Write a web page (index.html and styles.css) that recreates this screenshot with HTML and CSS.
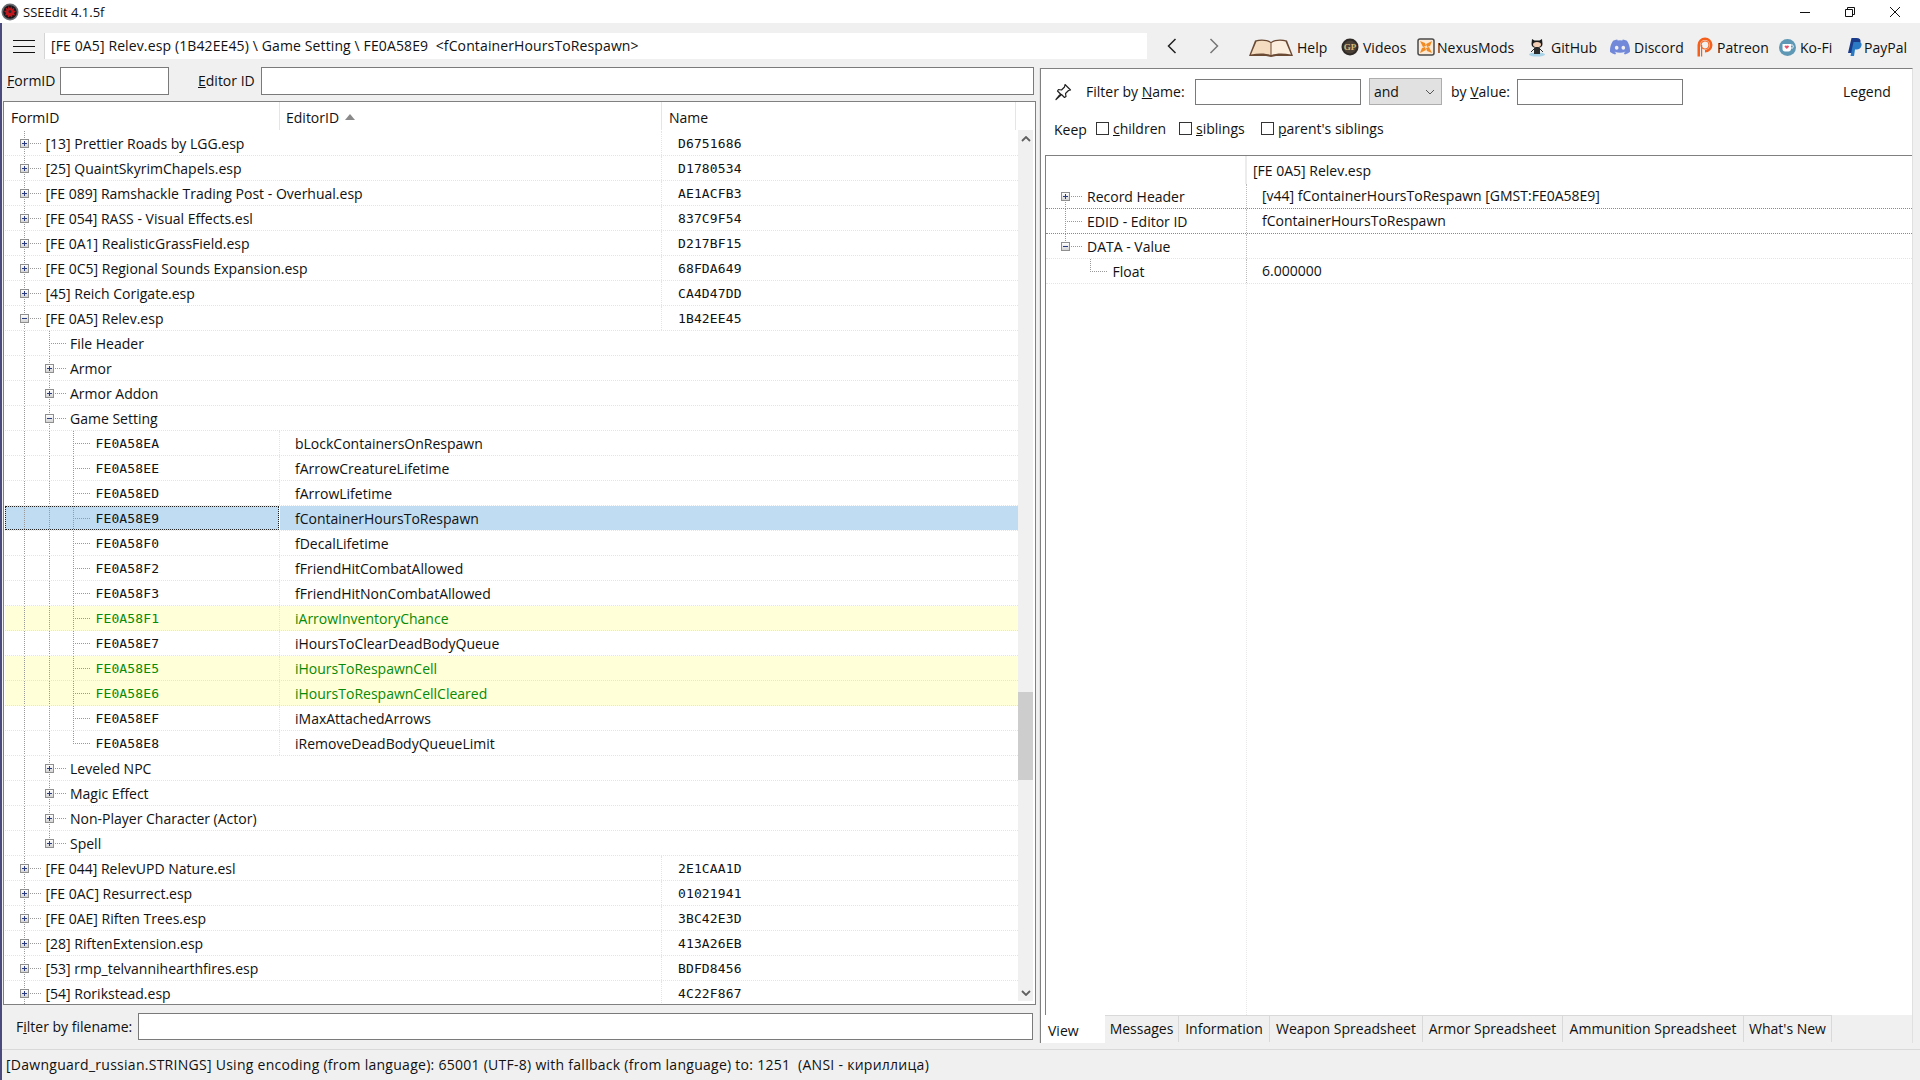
FILE: index.html
```html
<!DOCTYPE html>
<html lang="en">
<head>
  <meta charset="UTF-8" />
  <title>SSEEdit 4.1.5f</title>
  <link rel="stylesheet" href="styles.css">
</head>
<body>

<div class="titlebar">
  <svg class="app-icon" viewBox="0 0 18 18" width="18" height="18">
    <circle cx="9" cy="9" r="8.5" fill="#6a6d72"/>
    <circle cx="9" cy="9" r="6.8" fill="#17171b"/>
    <path d="M9 5.500l1.500-2.500.5 3 2.500-1.500-1 3 2.500.5-2 2 1 2.500-2.500-.5-.5 2.500-2-1.500-2 1.500-.5-2.500-2.500.5 1-2.500-2-2 2.500-.5-1-3 2.500 1.500.5-3z" fill="#c3161c"/>
    <circle cx="9" cy="8.500" r="1.500" fill="#28282c"/>
  </svg>
  <span class="app-title">SSEEdit 4.1.5f</span>
  <div class="winctl">
    <svg viewBox="0 0 12 12" width="12" height="12"><path d="M1 6.500h10" stroke="#111" fill="none"/></svg>
    <svg viewBox="0 0 12 12" width="12" height="12"><path d="M1.500 3.500h7v7h-7zM3.500 3.500v-2h7v7h-2" stroke="#111" fill="none"/></svg>
    <svg viewBox="0 0 12 12" width="12" height="12"><path d="M1 1l10 10M11 1L1 11" stroke="#111" fill="none"/></svg>
  </div>
</div>

<div class="window">
  <div class="toolbar">
    <div class="burger"><i></i><i></i><i></i></div>
    <div class="pathbox">[FE 0A5] Relev.esp (1B42EE45) \ Game Setting \ FE0A58E9  &lt;fContainerHoursToRespawn&gt;</div>
    <div class="nav">
      <svg viewBox="0 0 10 18" width="10" height="18"><path d="M8.500 2L1.500 9l7 7" fill="none" stroke="#222" stroke-width="1.500"/></svg>
      <svg viewBox="0 0 10 18" width="10" height="18"><path d="M1.500 2l7 7-7 7" fill="none" stroke="#777" stroke-width="1.500"/></svg>
    </div>
    <div class="tools">
      <div class="tool">
        <svg viewBox="0 0 44 19" width="44" height="19">
          <path d="M0 18L6 2.500C11 1 18 1 22 4c4-3 11-3 16-1.500L44 18H27l-5 1-5-1z" fill="#6b4a34"/>
          <path d="M2 16.500L7.500 3.500C12 2.200 18 2.500 21.500 5v12c-5-2-12-2-19.500-.5z" fill="#f3dcc0"/>
          <path d="M42 16.500L36.500 3.500C32 2.200 26 2.500 22.500 5v12c5-2 12-2 19.500-.5z" fill="#fbeedd"/>
        </svg>
        <span>Help</span>
      </div>
      <div class="tool">
        <svg viewBox="0 0 18 18" width="18" height="18">
          <circle cx="9" cy="9" r="8.500" fill="#2f2a26"/>
          <circle cx="9" cy="9" r="6.500" fill="#4a4036"/>
          <text x="9" y="12" class="gp-mark">GP</text>
        </svg>
        <span>Videos</span>
      </div>
      <div class="tool">
        <svg viewBox="0 0 18 18" width="18" height="18">
          <rect x="1" y="1" width="16" height="16" rx="2" fill="#fbe9d6" stroke="#4a4a4a" stroke-width="1.500"/>
          <path d="M3 3l5 2 1 3-3 1zM15 3l-2 5-3 1-1-3zM3 15l2-5 3-1 1 3zM15 15l-5-2-1-3 3-1z" fill="#f08a24"/>
        </svg>
        <span>NexusMods</span>
      </div>
      <div class="tool">
        <svg viewBox="0 0 18 20" width="18" height="20">
          <ellipse cx="9" cy="17.500" rx="8" ry="2" fill="#a9d3e8"/>
          <path d="M4 2l2.500 1.500h5L14 2l.5 5c0 2.500-2 4-5.500 4S3.500 9.500 3.500 7z" fill="#1c1c1c"/>
          <ellipse cx="9" cy="7.500" rx="4" ry="2.600" fill="#f3cfb5"/>
          <path d="M6 11h6v6H6z" fill="#2b2b2b"/>
          <path d="M6 12l-3 3M12 12l3 3" stroke="#2b2b2b"/>
        </svg>
        <span>GitHub</span>
      </div>
      <div class="tool">
        <svg viewBox="0 0 24 24" width="20" height="20"><path fill="#7289da" d="M20.317 4.370a19.791 19.791 0 0 0-4.885-1.515.074.074 0 0 0-.079.037c-.210.375-.444.864-.608 1.250a18.270 18.270 0 0 0-5.487 0 12.640 12.640 0 0 0-.617-1.250.077.077 0 0 0-.079-.037A19.736 19.736 0 0 0 3.677 4.370a.070.070 0 0 0-.032.027C.533 9.046-.320 13.580.099 18.057a.082.082 0 0 0 .031.057 19.900 19.900 0 0 0 5.993 3.030.078.078 0 0 0 .084-.028 14.090 14.090 0 0 0 1.226-1.994.076.076 0 0 0-.041-.106 13.107 13.107 0 0 1-1.872-.892.077.077 0 0 1-.008-.128 10.200 10.200 0 0 0 .372-.292.074.074 0 0 1 .077-.010c3.928 1.793 8.180 1.793 12.062 0a.074.074 0 0 1 .078.010c.120.098.246.198.373.292a.077.077 0 0 1-.006.127 12.299 12.299 0 0 1-1.873.892.077.077 0 0 0-.041.107c.360.698.772 1.362 1.225 1.993a.076.076 0 0 0 .084.028 19.839 19.839 0 0 0 6.002-3.030.077.077 0 0 0 .032-.054c.500-5.177-.838-9.674-3.549-13.660a.061.061 0 0 0-.031-.030zM8.020 15.330c-1.183 0-2.157-1.085-2.157-2.419 0-1.333.956-2.419 2.157-2.419 1.210 0 2.176 1.096 2.157 2.420 0 1.333-.956 2.418-2.157 2.418zm7.975 0c-1.183 0-2.157-1.085-2.157-2.419 0-1.333.955-2.419 2.157-2.419 1.210 0 2.176 1.096 2.157 2.420 0 1.333-.946 2.418-2.157 2.418z"/></svg>
        <span>Discord</span>
      </div>
      <div class="tool">
        <svg viewBox="0 0 16 20" width="16" height="20">
          <path fill-rule="evenodd" d="M8 .500a7.500 7.500 0 0 1 0 15v-2.500a5 5 0 1 0-5-5v11.500H.500V8A7.500 7.500 0 0 1 8 .500z" fill="#f4601c"/>
          <circle cx="8" cy="8" r="4" fill="none" stroke="#f4601c" stroke-width="1.200"/>
          <path d="M4 19.500V8h1.200v11.500z" fill="#f4601c"/>
        </svg>
        <span>Patreon</span>
      </div>
      <div class="tool">
        <svg viewBox="0 0 17 17" width="17" height="17">
          <circle cx="8.500" cy="8.500" r="8.500" fill="#5f98b5"/>
          <path d="M3.500 5h8.500v5c0 1.500-1 2.500-2.500 2.500H6c-1.500 0-2.500-1-2.500-2.500z" fill="#fff"/>
          <path d="M12 6h1.500c1 0 1 3 0 3H12" fill="none" stroke="#fff"/>
          <path d="M7.800 10L5.800 8c-.8-1 .8-2.200 2-1 1.200-1.200 2.800 0 2 1z" fill="#e8546c"/>
        </svg>
        <span>Ko-Fi</span>
      </div>
      <div class="tool">
        <svg viewBox="0 0 14 19" width="14" height="19">
          <path d="M3.500 0h5c3 0 4.500 1.500 4 4-.5 3-2.500 4.500-5.500 4.500H5.500L4.500 15H0z" fill="#1a3a8a"/>
          <path d="M5.500 4h5c2.500 0 3.500 1.500 3 3.500-.5 2.500-2.500 4-5 4H7L6 18H2.500z" fill="#2a7ac4"/>
        </svg>
        <span>PayPal</span>
      </div>
    </div>
  </div>

  <div class="main">
    <div class="left">
      <div class="idfilter">
        <label class="lbl-form"><u>F</u>ormID</label>
        <div class="field field-form"></div>
        <label class="lbl-editor"><u>E</u>ditor ID</label>
        <div class="field field-editor"></div>
      </div>

      <div class="listbox">
        <div class="head">
          <div class="hd hd1">FormID</div>
          <div class="hd hd2">EditorID<i class="sort"></i></div>
          <div class="hd hd3">Name</div>
        </div>
        <div class="listwrap">
          <div class="rows">
            <div class="row"><div class="c1"><span class="node"><b class="box plus"></b></span>[13] Prettier Roads by LGG.esp</div><div class="c2"></div><div class="c3 hex">D6751686</div></div>
            <div class="row"><div class="c1"><span class="node"><b class="box plus"></b></span>[25] QuaintSkyrimChapels.esp</div><div class="c2"></div><div class="c3 hex">D1780534</div></div>
            <div class="row"><div class="c1"><span class="node"><b class="box plus"></b></span>[FE 089] Ramshackle Trading Post - Overhual.esp</div><div class="c2"></div><div class="c3 hex">AE1ACFB3</div></div>
            <div class="row"><div class="c1"><span class="node"><b class="box plus"></b></span>[FE 054] RASS - Visual Effects.esl</div><div class="c2"></div><div class="c3 hex">837C9F54</div></div>
            <div class="row"><div class="c1"><span class="node"><b class="box plus"></b></span>[FE 0A1] RealisticGrassField.esp</div><div class="c2"></div><div class="c3 hex">D217BF15</div></div>
            <div class="row"><div class="c1"><span class="node"><b class="box plus"></b></span>[FE 0C5] Regional Sounds Expansion.esp</div><div class="c2"></div><div class="c3 hex">68FDA649</div></div>
            <div class="row"><div class="c1"><span class="node"><b class="box plus"></b></span>[45] Reich Corigate.esp</div><div class="c2"></div><div class="c3 hex">CA4D47DD</div></div>
            <div class="row"><div class="c1"><span class="node"><b class="box minus"></b></span>[FE 0A5] Relev.esp</div><div class="c2"></div><div class="c3 hex">1B42EE45</div></div>

            <div class="row"><div class="c1"><span class="gd"></span><span class="node"></span>File Header</div><div class="c2"></div><div class="c3"></div></div>
            <div class="row"><div class="c1"><span class="gd"></span><span class="node"><b class="box plus"></b></span>Armor</div><div class="c2"></div><div class="c3"></div></div>
            <div class="row"><div class="c1"><span class="gd"></span><span class="node"><b class="box plus"></b></span>Armor Addon</div><div class="c2"></div><div class="c3"></div></div>
            <div class="row"><div class="c1"><span class="gd"></span><span class="node"><b class="box minus"></b></span>Game Setting</div><div class="c2"></div><div class="c3"></div></div>

            <div class="row rec"><div class="c1"><span class="gd"></span><span class="gd"></span><span class="node"></span><span class="hex">FE0A58EA</span></div><div class="c2">bLockContainersOnRespawn</div><div class="c3"></div></div>
            <div class="row rec"><div class="c1"><span class="gd"></span><span class="gd"></span><span class="node"></span><span class="hex">FE0A58EE</span></div><div class="c2">fArrowCreatureLifetime</div><div class="c3"></div></div>
            <div class="row rec"><div class="c1"><span class="gd"></span><span class="gd"></span><span class="node"></span><span class="hex">FE0A58ED</span></div><div class="c2">fArrowLifetime</div><div class="c3"></div></div>
            <div class="row rec sel"><div class="c1"><span class="gd"></span><span class="gd"></span><span class="node"></span><span class="hex">FE0A58E9</span></div><div class="c2">fContainerHoursToRespawn</div><div class="c3"></div></div>
            <div class="row rec"><div class="c1"><span class="gd"></span><span class="gd"></span><span class="node"></span><span class="hex">FE0A58F0</span></div><div class="c2">fDecalLifetime</div><div class="c3"></div></div>
            <div class="row rec"><div class="c1"><span class="gd"></span><span class="gd"></span><span class="node"></span><span class="hex">FE0A58F2</span></div><div class="c2">fFriendHitCombatAllowed</div><div class="c3"></div></div>
            <div class="row rec"><div class="c1"><span class="gd"></span><span class="gd"></span><span class="node"></span><span class="hex">FE0A58F3</span></div><div class="c2">fFriendHitNonCombatAllowed</div><div class="c3"></div></div>
            <div class="row rec new"><div class="c1"><span class="gd"></span><span class="gd"></span><span class="node"></span><span class="hex">FE0A58F1</span></div><div class="c2">iArrowInventoryChance</div><div class="c3"></div></div>
            <div class="row rec"><div class="c1"><span class="gd"></span><span class="gd"></span><span class="node"></span><span class="hex">FE0A58E7</span></div><div class="c2">iHoursToClearDeadBodyQueue</div><div class="c3"></div></div>
            <div class="row rec new"><div class="c1"><span class="gd"></span><span class="gd"></span><span class="node"></span><span class="hex">FE0A58E5</span></div><div class="c2">iHoursToRespawnCell</div><div class="c3"></div></div>
            <div class="row rec new"><div class="c1"><span class="gd"></span><span class="gd"></span><span class="node"></span><span class="hex">FE0A58E6</span></div><div class="c2">iHoursToRespawnCellCleared</div><div class="c3"></div></div>
            <div class="row rec"><div class="c1"><span class="gd"></span><span class="gd"></span><span class="node"></span><span class="hex">FE0A58EF</span></div><div class="c2">iMaxAttachedArrows</div><div class="c3"></div></div>
            <div class="row rec"><div class="c1"><span class="gd"></span><span class="gd"></span><span class="node end"></span><span class="hex">FE0A58E8</span></div><div class="c2">iRemoveDeadBodyQueueLimit</div><div class="c3"></div></div>

            <div class="row"><div class="c1"><span class="gd"></span><span class="node"><b class="box plus"></b></span>Leveled NPC</div><div class="c2"></div><div class="c3"></div></div>
            <div class="row"><div class="c1"><span class="gd"></span><span class="node"><b class="box plus"></b></span>Magic Effect</div><div class="c2"></div><div class="c3"></div></div>
            <div class="row"><div class="c1"><span class="gd"></span><span class="node"><b class="box plus"></b></span>Non-Player Character (Actor)</div><div class="c2"></div><div class="c3"></div></div>
            <div class="row"><div class="c1"><span class="gd"></span><span class="node end"><b class="box plus"></b></span>Spell</div><div class="c2"></div><div class="c3"></div></div>

            <div class="row"><div class="c1"><span class="node"><b class="box plus"></b></span>[FE 044] RelevUPD Nature.esl</div><div class="c2"></div><div class="c3 hex">2E1CAA1D</div></div>
            <div class="row"><div class="c1"><span class="node"><b class="box plus"></b></span>[FE 0AC] Resurrect.esp</div><div class="c2"></div><div class="c3 hex">01021941</div></div>
            <div class="row"><div class="c1"><span class="node"><b class="box plus"></b></span>[FE 0AE] Riften Trees.esp</div><div class="c2"></div><div class="c3 hex">3BC42E3D</div></div>
            <div class="row"><div class="c1"><span class="node"><b class="box plus"></b></span>[28] RiftenExtension.esp</div><div class="c2"></div><div class="c3 hex">413A26EB</div></div>
            <div class="row"><div class="c1"><span class="node"><b class="box plus"></b></span>[53] rmp_telvannihearthfires.esp</div><div class="c2"></div><div class="c3 hex">BDFD8456</div></div>
            <div class="row"><div class="c1"><span class="node"><b class="box plus"></b></span>[54] Rorikstead.esp</div><div class="c2"></div><div class="c3 hex">4C22F867</div></div>
          </div>
          <div class="scrollbar">
            <div class="sb-btn"><svg viewBox="0 0 10 6" width="10" height="6"><path d="M1 5l4-4 4 4" fill="none" stroke="#606060" stroke-width="1.800"/></svg></div>
            <div class="sb-space"></div>
            <div class="sb-thumb"></div>
            <div class="sb-rest"></div>
            <div class="sb-btn"><svg viewBox="0 0 10 6" width="10" height="6"><path d="M1 1l4 4 4-4" fill="none" stroke="#606060" stroke-width="1.800"/></svg></div>
          </div>
        </div>
      </div>

      <div class="filefilter">
        <label>F<u>i</u>lter by filename:</label>
        <div class="field field-file"></div>
      </div>
    </div>

    <div class="right">
      <div class="panel">
        <div class="namefilter">
          <svg class="pin" viewBox="0 0 18 18" width="18" height="18"><path d="M11 1.500l5.500 5.500-2 .5-3 3 .5 3-1.500 1-3-3L2 16.500l4.500-5.500-3-3 1-1.500 3 .5 3-3z" fill="#fff" stroke="#222" stroke-width="1.200" stroke-linejoin="round"/></svg>
          <label class="lbl-name">Filter by <u>N</u>ame:</label>
          <div class="field field-name"></div>
          <div class="combo"><span>and</span><svg viewBox="0 0 10 6" width="10" height="6"><path d="M1 1l4 4 4-4" fill="none" stroke="#555"/></svg></div>
          <label class="lbl-value">by <u>V</u>alue:</label>
          <div class="field field-value"></div>
          <span class="legend">Legend</span>
        </div>
        <div class="keep">
          <span class="keep-word">Keep</span>
          <i class="check"></i><span class="opt opt-children"><u>c</u>hildren</span>
          <i class="check"></i><span class="opt opt-siblings"><u>s</u>iblings</span>
          <i class="check"></i><span class="opt"><u>p</u>arent's siblings</span>
        </div>
        <div class="view">
          <div class="vrow vhead"><div class="vname"></div><div class="vval vfile">[FE 0A5] Relev.esp</div></div>
          <div class="vrow dark"><div class="vname"><span class="node first"><b class="box plus"></b></span>Record Header</div><div class="vval">[v44] fContainerHoursToRespawn [GMST:FE0A58E9]</div></div>
          <div class="vrow dark"><div class="vname"><span class="node"></span>EDID - Editor ID</div><div class="vval">fContainerHoursToRespawn</div></div>
          <div class="vrow"><div class="vname"><span class="node end"><b class="box minus"></b></span>DATA - Value</div><div class="vval"></div></div>
          <div class="vrow"><div class="vname"><span class="gd blank"></span><span class="node end"></span>Float</div><div class="vval">6.000000</div></div>
          <div class="vrest"></div>
        </div>
        <div class="tabs">
          <div class="tab active">View</div>
          <div class="tab">Messages</div>
          <div class="tab">Information</div>
          <div class="tab">Weapon Spreadsheet</div>
          <div class="tab">Armor Spreadsheet</div>
          <div class="tab">Ammunition Spreadsheet</div>
          <div class="tab">What's New</div>
        </div>
      </div>
    </div>
  </div>

  <div class="status">[Dawnguard_russian.STRINGS] Using encoding (from language): 65001 (UTF-8) with fallback (from language) to: 1251  (ANSI - кириллица)</div>
</div>

</body>
</html>
```

FILE: styles.css
```css
* {
  box-sizing: border-box;
}

body {
  margin: 0;
  width: 1920px;
  height: 1080px;
  overflow: hidden;
  background: #f0f0f0;
  color: #111;
  font-family: "Open Sans", "Noto Sans", sans-serif;
  font-size: 14px;
  display: flex;
  flex-direction: column;
}

label {
  white-space: nowrap;
}

/* title bar */
.titlebar {
  height: 23px;
  background: #fff;
  display: flex;
  align-items: center;
  flex: none;
}

.app-icon {
  margin-left: 1px;
}

.app-title {
  margin-left: 4px;
  font-size: 13px;
}

.winctl {
  margin-left: auto;
  display: flex;
  gap: 33px;
  padding-right: 19px;
}

.window {
  flex: 1;
  display: flex;
  flex-direction: column;
  border-left: 2px solid #4b4a7c;
  min-height: 0;
}

/* toolbar */
.toolbar {
  height: 44px;
  flex: none;
  display: flex;
  align-items: flex-start;
  padding-top: 10px;
}

.burger {
  width: 22px;
  margin-left: 11px;
  margin-top: 7px;
  display: flex;
  flex-direction: column;
  gap: 5px;
  flex: none;
}

.burger i {
  display: block;
  height: 1px;
  background: #111;
}

.pathbox {
  width: 1103px;
  height: 26px;
  margin-left: 9px;
  padding-left: 6px;
  line-height: 26px;
  background: #fff;
  border-left: 1px solid #d4d4d4;
  white-space: pre;
  letter-spacing: 0.12px;
  flex: none;
}

.nav {
  width: 102px;
  padding: 4px 0 0 20px;
  display: flex;
  gap: 32px;
  flex: none;
}

.tools {
  display: grid;
  grid-template-columns: 92px 76px 111px 82px 87px 82px 69px 60px;
  align-items: center;
  height: 28px;
  flex: none;
}

.tool {
  display: flex;
  align-items: center;
  gap: 4px;
  white-space: nowrap;
}

.tool:nth-child(3),
.tool:nth-child(8) {
  gap: 2px;
}

.tool:nth-child(4) {
  gap: 5px;
}

.gp-mark {
  font-family: "Liberation Serif", serif;
  font-size: 9px;
  font-weight: bold;
  fill: #d8b878;
  text-anchor: middle;
}

/* main split */
.main {
  flex: 1;
  display: flex;
  min-height: 0;
}

.left {
  width: 1034px;
  flex: none;
  display: flex;
  flex-direction: column;
}

.field {
  height: 28px;
  background: #fff;
  border: 1px solid #7a7a7a;
  flex: none;
}

.idfilter {
  height: 28px;
  display: flex;
  align-items: center;
  padding-left: 5px;
  flex: none;
}

.idfilter label {
  padding-bottom: 2px;
}

.lbl-form {
  width: 53px;
}

.field-form {
  width: 109px;
}

.lbl-editor {
  width: 63px;
  margin-left: 29px;
}

.field-editor {
  width: 773px;
}

/* left list */
.listbox {
  height: 904px;
  margin: 6px 0 0 1px;
  width: 1033px;
  border: 1px solid #808080;
  background: #fff;
  overflow: hidden;
  flex: none;
}

.head {
  display: flex;
  height: 29px;
}

.hd {
  display: flex;
  align-items: center;
  height: 28px;
  padding-top: 2px;
  border-right: 1px solid #e5e5e5;
}

.hd1 {
  width: 276px;
  padding-left: 7px;
}

.hd2 {
  width: 382px;
  padding-left: 6px;
}

.hd3 {
  width: 354px;
  padding-left: 7px;
}

.sort {
  width: 0;
  height: 0;
  margin-left: 6px;
  border-left: 5px solid transparent;
  border-right: 5px solid transparent;
  border-bottom: 6px solid #8a8a8a;
}

.listwrap {
  display: flex;
}

.rows {
  width: 1013px;
  margin-left: 1px;
  flex: none;
}

.row {
  height: 25px;
  display: flex;
  border-bottom: 1px dotted #e4e4e4;
  white-space: nowrap;
}

.c1 {
  width: 275px;
  height: 100%;
  flex: none;
  display: flex;
  align-items: center;
  position: relative;
}

.c2 {
  width: 382px;
  padding-left: 15px;
  flex: none;
  line-height: 25px;
}

.c3 {
  flex: 1;
  padding-left: 15px;
  line-height: 25px;
}

.c3.hex {
  margin-left: -1px;
  padding-left: 16px;
  border-left: 1px dotted #e4e4e4;
}

.hex {
  font-family: "DejaVu Sans Mono", "Liberation Mono", monospace;
  font-size: 13px;
  letter-spacing: 0.12px;
}

.rec .c1 {
  border-right: 1px dotted #e4e4e4;
}

.rec .node {
  width: 41.5px;
}

.new {
  background: #ffffd8;
  color: #078a07;
}

.sel .c2,
.sel .c3 {
  background: #c0dcf3;
}

.sel .c1 {
  width: 275px;
  border-right: 0;
  background: linear-gradient(#c0dcf3, #c0dcf3) 0 0 / 274px 100% no-repeat;
}

.sel .c1::after {
  content: "";
  position: absolute;
  top: 0;
  left: 0;
  right: 1px;
  bottom: 0;
  border: 1px dotted #222;
}

/* tree guides */
.gd {
  width: 24.5px;
  height: 100%;
  flex: none;
  background: repeating-linear-gradient(#999 0 1px, transparent 1px 2px) 19px 0 / 1px 100% no-repeat;
}

.gd.blank {
  background: none;
}

.node {
  width: 40.5px;
  height: 100%;
  flex: none;
  position: relative;
  background:
    repeating-linear-gradient(#999 0 1px, transparent 1px 2px) 19px 0 / 1px 100% no-repeat,
    repeating-linear-gradient(90deg, #999 0 1px, transparent 1px 2px) 19px 12px / 17px 1px no-repeat;
}

.node.end {
  background:
    repeating-linear-gradient(#999 0 1px, transparent 1px 2px) 19px 0 / 1px 13px no-repeat,
    repeating-linear-gradient(90deg, #999 0 1px, transparent 1px 2px) 19px 12px / 17px 1px no-repeat;
}

.node.first {
  background:
    repeating-linear-gradient(#999 0 1px, transparent 1px 2px) 19px 12px / 1px 13px no-repeat,
    repeating-linear-gradient(90deg, #999 0 1px, transparent 1px 2px) 19px 12px / 17px 1px no-repeat;
}

.box {
  position: absolute;
  left: 15px;
  top: 8px;
  width: 9px;
  height: 9px;
  border: 1px solid #8f8f8f;
  background: linear-gradient(#fff, #d4d4d4);
}

.box::before {
  content: "";
  position: absolute;
  left: 1px;
  top: 3px;
  width: 5px;
  height: 1px;
  background: #2a3a80;
}

.box.plus::after {
  content: "";
  position: absolute;
  left: 3px;
  top: 1px;
  width: 1px;
  height: 5px;
  background: #2a3a80;
}

/* scrollbar */
.scrollbar {
  width: 15px;
  height: 871px;
  margin-top: -1px;
  background: #f0f0f0;
  display: flex;
  flex-direction: column;
  flex: none;
}

.sb-btn {
  height: 17px;
  display: flex;
  align-items: center;
  justify-content: center;
  flex: none;
}

.sb-space {
  height: 545px;
  flex: none;
}

.sb-thumb {
  height: 88px;
  background: #cdcdcd;
  flex: none;
}

.sb-rest {
  flex: 1;
}

.filefilter {
  height: 27px;
  margin-top: 8px;
  padding-left: 14px;
  display: flex;
  align-items: center;
  flex: none;
}

.filefilter label {
  width: 122px;
}

.field-file {
  width: 895px;
  height: 27px;
}

/* right side */
.right {
  flex: 1;
  padding: 1px 7px 6px 4px;
  display: flex;
}

.panel {
  flex: 1;
  background: #fff;
  border-top: 1px solid #808080;
  border-left: 1px solid #808080;
  border-right: 1px solid #e0e0e0;
  box-shadow: -1px 0 0 #e0e0e0;
  display: flex;
  flex-direction: column;
}

.namefilter {
  height: 27px;
  margin-top: 9px;
  padding-left: 13px;
  display: flex;
  align-items: center;
  flex: none;
}

.pin {
  flex: none;
}

.lbl-name {
  width: 109px;
  margin-left: 14px;
}

.field-name {
  width: 166px;
  height: 26px;
}

.combo {
  width: 73px;
  height: 27px;
  margin-left: 8px;
  padding: 0 6px 0 4px;
  background: #e1e1e1;
  border: 1px solid #adadad;
  display: flex;
  align-items: center;
  justify-content: space-between;
  flex: none;
}

.lbl-value {
  width: 66px;
  margin-left: 9px;
}

.field-value {
  width: 166px;
  height: 26px;
}

.legend {
  margin-left: 160px;
}

.keep {
  height: 20px;
  margin-top: 13px;
  padding-left: 13px;
  display: flex;
  align-items: center;
  flex: none;
}

.keep-word {
  width: 42px;
  padding-top: 3px;
}

.check {
  width: 13px;
  height: 13px;
  margin-right: 4px;
  background: #fff;
  border: 1px solid #333;
  flex: none;
}

.opt {
  white-space: nowrap;
}

.opt-children {
  width: 66px;
}

.opt-siblings {
  width: 65px;
}

.view {
  flex: 1;
  margin: 17px 0 7px 4px;
  border-left: 1px solid #808080;
  border-top: 1px solid #808080;
  display: flex;
  flex-direction: column;
  min-height: 0;
}

.vrow {
  height: 25px;
  display: flex;
  border-bottom: 1px dotted #e4e4e4;
  white-space: nowrap;
  flex: none;
}

.vrow.dark {
  border-bottom-color: #8a8a8a;
}

.vhead {
  height: 28px;
  border-bottom: 0;
}

.vname {
  width: 201px;
  height: 100%;
  display: flex;
  align-items: center;
  position: relative;
  border-right: 1px dotted #bbb;
  flex: none;
}

.vhead .vname {
  border-right: 2px solid #ececec;
}

.vname .node {
  width: 41px;
}

.vname .gd + .node {
  width: 42px;
}

.vval {
  padding-left: 15px;
  line-height: 24px;
}

.vfile {
  padding-left: 6px;
  line-height: 30px;
}

.vrest {
  flex: 1;
  width: 201px;
  border-right: 1px dotted #e8e8e8;
}

.tabs {
  height: 28px;
  margin-top: -7px;
  background: #f0f0f0;
  display: flex;
  flex: none;
}

.tab {
  display: flex;
  align-items: center;
  justify-content: center;
  height: 27px;
  padding-bottom: 2px;
  border-top: 1px solid #d9d9d9;
  border-right: 1px solid #d9d9d9;
  white-space: nowrap;
}

.tab.active {
  width: 64px;
  height: 28px;
  justify-content: flex-start;
  padding: 2px 0 0 7px;
  background: #fff;
  border: 0;
}

.tab:nth-child(2) { width: 74px; }
.tab:nth-child(3) { width: 91px; }
.tab:nth-child(4) { width: 153px; }
.tab:nth-child(5) { width: 140px; }
.tab:nth-child(6) { width: 181px; }
.tab:nth-child(7) { width: 88px; }

.status {
  height: 31px;
  padding-left: 4px;
  line-height: 30px;
  border-top: 1px solid #d9d9d9;
  white-space: pre;
  letter-spacing: 0.27px;
  flex: none;
}
```
